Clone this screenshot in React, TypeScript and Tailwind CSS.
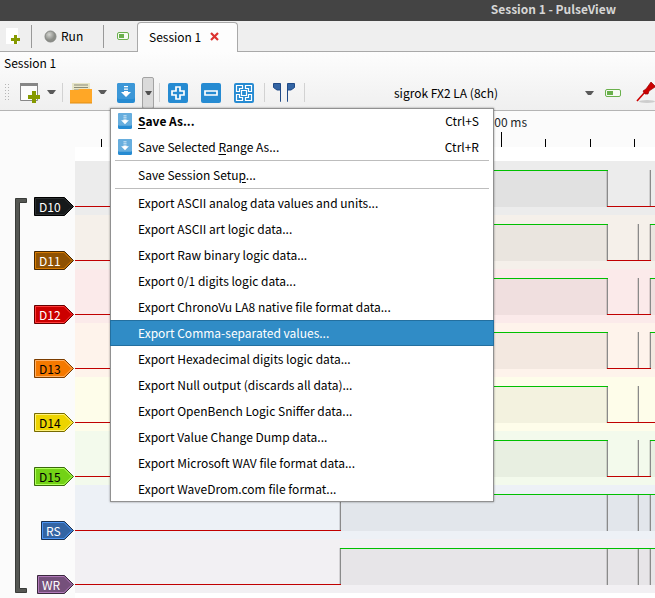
import type { ReactNode } from "react";

type Segment = [from: number, to: number, high: boolean];

interface Channel {
  name: string;
  band: string;
  fill: string;
  edge: string;
  glow: string;
  light: boolean;
  flagWidth: number;
  segments: Segment[];
  spikes: number[];
}

const END = 4000;
const DATA: Segment[] = [[0, 265, false], [265, 532, true], [532, 575, false], [575, END, true]];
const FALLING: Segment[] = [[0, 265, false], [265, 532, true], [532, END, false]];
const CTRL: Segment[] = [[0, 265, false], [265, END, true]];

const channels: Channel[] = [
  { name: "D10", band: "bg-[#ececec]", fill: "#16191a", edge: "#000000", glow: "#2b2f30", light: true, flagWidth: 40, segments: FALLING, spikes: [265, 532, 575] },
  { name: "D11", band: "bg-[#f5f0ea]", fill: "#8f5202", edge: "#472901", glow: "#d87c04", light: true, flagWidth: 40, segments: DATA, spikes: [265, 532, 563, 575] },
  { name: "D12", band: "bg-[#fbeaea]", fill: "#cc0000", edge: "#660000", glow: "#ff3b3b", light: true, flagWidth: 40, segments: DATA, spikes: [265, 532, 563, 575] },
  { name: "D13", band: "bg-[#fef3eb]", fill: "#f57900", edge: "#7a3c00", glow: "#ffb066", light: false, flagWidth: 40, segments: DATA, spikes: [265, 532, 563, 575] },
  { name: "D14", band: "bg-[#fefdea]", fill: "#edd400", edge: "#766a00", glow: "#fff27a", light: false, flagWidth: 40, segments: FALLING, spikes: [265, 532, 563] },
  { name: "D15", band: "bg-[#f3faec]", fill: "#73d216", edge: "#39690b", glow: "#b0ff5c", light: false, flagWidth: 40, segments: DATA, spikes: [265, 532, 563, 575] },
  { name: "RS", band: "bg-[#edf1f6]", fill: "#3465a4", edge: "#1a3252", glow: "#4e97f6", light: true, flagWidth: 33, segments: CTRL, spikes: [265, 532, 563, 575] },
  { name: "WR", band: "bg-[#f2f0f3]", fill: "#75507b", edge: "#3a283d", glow: "#b078b8", light: true, flagWidth: 37, segments: CTRL, spikes: [265, 532, 563, 575] },
];

const exportsList = [
  "Export ASCII analog data values and units...",
  "Export ASCII art logic data...",
  "Export Raw binary logic data...",
  "Export 0/1 digits logic data...",
  "Export ChronoVu LA8 native file format data...",
  "Export Comma-separated values...",
  "Export Hexadecimal digits logic data...",
  "Export Null output (discards all data)...",
  "Export OpenBench Logic Sniffer data...",
  "Export Value Change Dump data...",
  "Export Microsoft WAV file format data...",
  "Export WaveDrom.com file format...",
];

function Flag({ channel }: { channel: Channel }) {
  const w = channel.flagWidth;
  return (
    <div
      className={`relative flex h-[19px] items-center pl-[5px] ${channel.light ? "text-white" : "text-black"}`}
      style={{ width: w }}
    >
      <svg className="absolute inset-0" width={w} height={19} aria-hidden="true">
        <path d={`M.5 .5H${w - 9.5}L${w - 0.5} 9.5L${w - 9.5} 18.5H.5Z`} fill={channel.fill} stroke={channel.edge} />
        <path d={`M1.5 1.5H${w - 10}L${w - 2} 9.5L${w - 10} 17.5H1.5Z`} fill="none" stroke={channel.glow} />
      </svg>
      <span className="relative">{channel.name}</span>
    </div>
  );
}

function Wave({ channel }: { channel: Channel }) {
  return (
    <svg className="block h-[54px] w-full" shapeRendering="crispEdges" aria-hidden="true">
      {channel.segments.map(([a, b, high]) =>
        high ? <rect key={`f${a}`} x={a} y={9} width={b - a} height={37} fill="#000" opacity={0.045} /> : null
      )}
      {channel.spikes.map((x) => (
        <g key={x}>
          <rect x={x - 1} y={9} width={1} height={37} fill="#000" opacity={0.12} />
          <rect x={x} y={9} width={1} height={37} fill="#8a8a8a" />
        </g>
      ))}
      {channel.segments.map(([a, b, high]) => (
        <rect key={a} x={a} y={high ? 9 : 45} width={b - a + 1} height={1} fill={high ? "#00c000" : "#c00000"} />
      ))}
    </svg>
  );
}

function Caret() {
  return (
    <svg width="9" height="5" viewBox="0 0 9 5" className="block" aria-hidden="true">
      <path d="M0 0H9L6 4H3Z" fill="#5a5a5a" />
    </svg>
  );
}

function SaveIcon({ faded = false, w = 18, h = 20 }: { faded?: boolean; w?: number; h?: number }) {
  return (
    <svg width={w} height={h} viewBox="0 0 18 20" preserveAspectRatio="none" className="block" aria-hidden="true">
      <rect width="18" height="20" rx="2" fill="#268bd2" />
      <rect width="18" height="16" rx="2" fill={faded ? "#67aede" : "#3c97d7"} />
      <path d="M7 3H11V4.200H7ZM7 5.500H11V6.700H7ZM7 8H11V9H14L9 14L4 9H7Z" fill="#fff" />
    </svg>
  );
}

function Battery({ w, h }: { w: number; h: number }) {
  return (
    <svg width={w} height={h} className="block" aria-hidden="true">
      <rect x=".5" y=".5" width={w - 1} height={h - 1} rx="1.500" fill="#f6fbf3" stroke="#6ab04c" />
      <rect x="2" y="2" width={Math.round(w * 0.38)} height={h - 4} fill="#6ab04c" />
    </svg>
  );
}

function Separator() {
  return <div className="h-[19px] w-px shrink-0 bg-[#d2d2d2]" />;
}

function Tool({ label, children, className = "" }: { label: string; children: ReactNode; className?: string }) {
  return (
    <button type="button" aria-label={label} className={`shrink-0 ${className}`}>
      {children}
    </button>
  );
}

function MenuItem({ children, shortcut, icon, active, bold }: { children: ReactNode; shortcut?: string; icon?: boolean; active?: boolean; bold?: boolean }) {
  return (
    <li role="none">
      <button
        type="button"
        role="menuitem"
        className={`flex h-[26px] w-full items-center pr-[15px] pl-2 text-left ${
          active ? "bg-[#308cc6] text-white shadow-[inset_0_0_0_1px_#236f9f]" : ""
        }`}
      >
        <span className="w-5 shrink-0">{icon && <SaveIcon faded w={14} h={16} />}</span>
        <span className={`flex-1 whitespace-nowrap ${bold ? "font-bold" : ""}`}>{children}</span>
        {shortcut && <span>{shortcut}</span>}
      </button>
    </li>
  );
}

function Underlined({ children }: { children: string }) {
  return <span className="underline underline-offset-2">{children}</span>;
}

function Rule() {
  return <li role="separator" className="mx-[5px] mb-px h-px bg-[#bdbdbd]" />;
}

function ExportMenu() {
  return (
    <ul
      role="menu"
      className="absolute top-[31px] -left-[7px] z-10 w-[384px] bg-white shadow-[inset_0_0_0_1px_#919191,0_0_2px_rgba(0,0,0,0.4)]"
    >
      <MenuItem icon bold shortcut="Ctrl+S"><Underlined>S</Underlined>ave As...</MenuItem>
      <MenuItem icon shortcut="Ctrl+R">Save Selected <Underlined>R</Underlined>ange As...</MenuItem>
      <Rule />
      <MenuItem>Save Session Setu<Underlined>p</Underlined>...</MenuItem>
      <Rule />
      {exportsList.map((text) => (
        <MenuItem key={text} active={text.includes("Comma")}>{text}</MenuItem>
      ))}
    </ul>
  );
}

function TabBar() {
  return (
    <nav className="flex h-[31px] bg-[#efefef] shadow-[inset_0_-1px_0_#a9a9a9]">
      <Tool label="New session" className="pl-[6px]">
        <svg width="15" height="17" className="block" aria-hidden="true">
          <path d="M0 0H12V16H0Z" fill="#fff" />
          <path d="M8 7H11V10H14V13H11V16H8V13H5V10H8Z" fill="#859900" />
        </svg>
      </Tool>
      <div className="mt-1 ml-[10px] h-[23px] w-px bg-[#999]" />
      <button type="button" className="flex w-[71px] items-center gap-1 pb-px pl-3">
        <svg width="13" height="13" className="block" aria-hidden="true">
          <defs>
            <radialGradient id="ball" cx="38%" cy="32%">
              <stop offset="0" stopColor="#d3d4d0" />
              <stop offset="1" stopColor="#8b8d88" />
            </radialGradient>
          </defs>
          <circle cx="6.500" cy="6.500" r="5.500" fill="url(#ball)" stroke="#858783" />
        </svg>
        Run
      </button>
      <div className="mt-1 h-[23px] w-px bg-[#999]" />
      <Tool label="Session settings" className="w-[33px] pb-px pl-[13px]"><Battery w={12} h={8} /></Tool>
      <div className="mt-px flex w-[101px] items-center gap-[9px] rounded-t-sm border border-b-0 border-[#a9a9a9] bg-[#fdfdfd] pb-[2px] pl-[11px]">
        <button type="button">Session 1</button>
        <Tool label="Close session">
          <svg width="9" height="9" className="block" aria-hidden="true">
            <path d="M1 1L8 8M8 1L1 8" stroke="#dc322f" strokeWidth="2.200" />
          </svg>
        </Tool>
      </div>
    </nav>
  );
}

function Toolbar() {
  return (
    <div className="flex h-[36px] items-center border-b border-[#b4b4b4] pl-[5px]">
      <svg width="5" height="18" className="block shrink-0" aria-hidden="true">
        {[0, 3, 6, 9, 12, 15].map((y) => (
          <path key={y} d={`M0 ${y}h1v1h-1zM3 ${y}h1v1h-1z`} fill="#b5b5b5" />
        ))}
      </svg>
      <Tool label="New" className="ml-[10px]">
        <svg width="20" height="20" className="block" aria-hidden="true">
          <path d="M.5 .5H17.500V17.500H.5Z" fill="#fcfcfc" stroke="#878787" />
          <path d="M0 0H18V3H0Z" fill="#878787" />
          <path d="M12 8H16V12H20V16H16V20H12V16H8V12H12Z" fill="#859900" />
        </svg>
      </Tool>
      <Tool label="New options" className="ml-[7px]"><Caret /></Tool>
      <div className="ml-[6px]"><Separator /></div>
      <Tool label="Open" className="ml-[7px]">
        <svg width="22" height="22" className="block" aria-hidden="true">
          <path d="M2 1H20V14H2Z" fill="#e8e6c8" />
          <path d="M4 3H18M4 5.500H18M4 8H18" stroke="#8b8b78" />
          <path d="M0 8H8L10 7H22V21H0Z" fill="#ffa726" />
          <path d="M0 21H22" stroke="#df8c12" />
        </svg>
      </Tool>
      <Tool label="Open options" className="ml-[6px]"><Caret /></Tool>
      <div className="relative ml-[10px] flex shrink-0 items-center">
        <Tool label="Save"><SaveIcon /></Tool>
        <button
          type="button"
          aria-label="Save options"
          aria-expanded="true"
          className="ml-[7px] flex h-[32px] w-3 items-center justify-center rounded-xs border border-[#a3a3a3] bg-[#dadada]"
        >
          <svg width="7" height="4" className="block" aria-hidden="true"><path d="M0 0H7L4.500 4H2.500Z" fill="#505050" /></svg>
        </button>
        <ExportMenu />
      </div>
      <div className="ml-[5px]"><Separator /></div>
      <Tool label="Zoom in" className="ml-[8px]">
        <svg width="20" height="20" className="block" aria-hidden="true">
          <rect width="20" height="20" rx="2" fill="#268bd2" />
          <path d="M8 4H12V8H16V12H12V16H8V12H4V8H8Z" fill="none" stroke="#fff" strokeWidth="1.700" />
        </svg>
      </Tool>
      <Tool label="Zoom out" className="ml-[13px]">
        <svg width="20" height="20" className="block" aria-hidden="true">
          <rect width="20" height="20" rx="2" fill="#268bd2" />
          <path d="M4 8H16V12H4Z" fill="none" stroke="#fff" strokeWidth="1.700" />
        </svg>
      </Tool>
      <Tool label="Zoom to fit" className="ml-[13px]">
        <svg width="20" height="20" className="block" aria-hidden="true">
          <rect width="20" height="20" rx="2" fill="#268bd2" />
          <g fill="none" stroke="#fff" strokeWidth="1.200">
            <path d="M8.500 2.500H2.500V8.500H5.500V5.500H8.500ZM11.500 2.500H17.500V8.500H14.500V5.500H11.500ZM17.500 11.500V17.500H11.500V14.500H14.500V11.500ZM8.500 17.500H2.500V11.500H5.500V14.500H8.500Z" />
            <path d="M7.500 7.500H12.500V12.500H7.500Z" />
          </g>
        </svg>
      </Tool>
      <div className="ml-[10px]"><Separator /></div>
      <Tool label="Show cursors" className="ml-[8px]">
        <svg width="22" height="19" className="block" aria-hidden="true">
          <path d="M.5 .5H7.500V18.500V7H4L.5 4.500Z" fill="#3465a4" stroke="#204a87" />
          <path d="M21.500 .5H14.500V18.500V7H18L21.500 4.500Z" fill="#3465a4" stroke="#204a87" />
        </svg>
      </Tool>
      <div className="ml-[9px]"><Separator /></div>
      <div className="relative ml-1 flex-1">
        <select aria-label="Device" className="w-full appearance-none bg-transparent pr-[14px] text-center leading-5">
          <option>sigrok FX2 LA (8ch)</option>
        </select>
        <div className="pointer-events-none absolute top-2 right-[3px]"><Caret /></div>
      </div>
      <Tool label="Configure device" className="ml-[8px]"><Battery w={16} h={8} /></Tool>
      <Tool label="Configure channels" className="ml-[15px]">
        <svg width="19" height="24" viewBox="0 0 19 24" className="block" aria-hidden="true">
          <ellipse cx="11" cy="20.500" rx="8" ry="1.500" fill="#000" opacity=".15" />
          <path d="M1 20L9 11" stroke="#cc0000" strokeWidth="1.600" />
          <path d="M7 10L10 8L15 1L19 5V6L13 10L12 13H9Z" fill="#cc0000" stroke="#990000" strokeWidth=".7" />
        </svg>
      </Tool>
    </div>
  );
}

function Ruler() {
  return (
    <svg className="block h-[36px] w-full" shapeRendering="crispEdges" aria-label="Time scale">
      {[101, 145, 190, 234, 323, 368, 412, 457, 545, 590, 634].map((x) => (
        <rect key={x} x={x} y={28} width={1} height={8} fill="#000" />
      ))}
      <rect x={501} y={21} width={1} height={15} fill="#000" />
      <text x={527} y={16} textAnchor="end" fill="#232629">+500 ms</text>
    </svg>
  );
}

function TraceView() {
  return (
    <main className="relative bg-[#fbfbfb]">
      <Ruler />
      <div className="ml-[75px] h-[14px] bg-white" />
      {channels.map((channel) => (
        <div key={channel.name} className="flex h-[54px]">
          <div className="flex w-[75px] shrink-0 items-start justify-end pt-[36px] pr-px">
            <Flag channel={channel} />
          </div>
          <div className={`min-w-0 flex-1 ${channel.band}`}>
            <Wave channel={channel} />
          </div>
        </div>
      ))}
      <div className="ml-[75px] h-[5px] bg-white" />
      <svg className="absolute top-[86px] left-[14px]" width="14" height="398" aria-hidden="true">
        <path d="M12.500 1.500H1.500V395.500H12.500V391.500H5.500V5.500H12.500Z" fill="#555753" stroke="#3a3c39" />
      </svg>
    </main>
  );
}

export default function App() {
  return (
    <div className="min-h-screen overflow-hidden bg-[#fbfbfb] font-['Noto_Sans_CJK_SC',sans-serif] text-xs leading-[18px] text-black">
      <header className="flex h-[21px] items-center justify-end bg-[#444] pr-[39px] pb-[3px] font-bold text-[#d6d6d6]">
        Session 1 - PulseView
      </header>
      <TabBar />
      <div className="bg-linear-to-b from-[#fdfdfd] to-[#efefef]">
        <div className="flex h-[23px] items-center pb-[2px] pl-1">Session 1</div>
        <Toolbar />
      </div>
      <TraceView />
    </div>
  );
}
